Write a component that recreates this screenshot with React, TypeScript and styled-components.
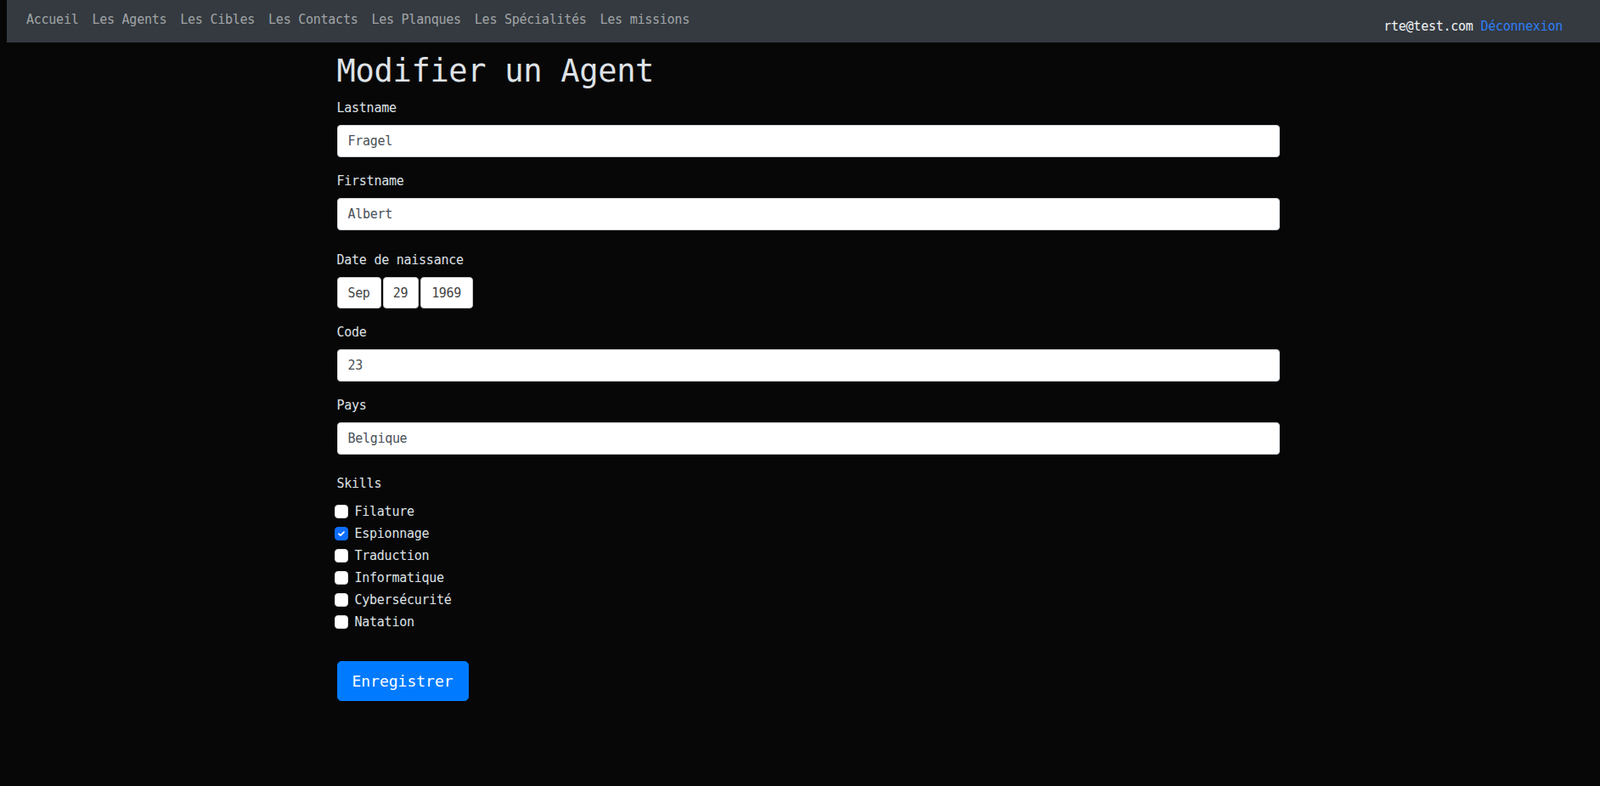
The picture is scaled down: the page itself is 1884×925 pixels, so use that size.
import styled, { createGlobalStyle } from "styled-components";

const mono = `"DejaVu Sans Mono", "Liberation Mono", monospace`;

const GlobalStyle = createGlobalStyle`
  html, body {
    margin: 0;
    padding: 0;
    background: #070707;
    font-family: ${mono};
    font-size: 15px;
    letter-spacing: -0.25px;
    color: #dee2e6;
  }
  * { box-sizing: border-box; }
`;

//Styled
const NavBar = styled.nav`
  margin-left: 8px;
  height: 50px;
  background: #343a40;
  display: flex;
  align-items: flex-start;
  justify-content: space-between;
  padding: 0 44px 0 15px;
`;

const NavLinks = styled.ul`
  list-style: none;
  margin: 11px 0 0;
  padding: 0;
  display: flex;
`;

const NavLink = styled.li`
  padding: 0 8px;
  line-height: 24px;
  color: rgba(255, 255, 255, 0.55);
  cursor: pointer;
`;

const UserBox = styled.div`
  margin-top: 19px;
  line-height: 24px;
  color: #f1f3f5;
  white-space: pre;
`;

const Logout = styled.a`
  color: #2f7ef6;
  text-decoration: none;
  cursor: pointer;
`;

const Page = styled.div`
  padding-left: 19px;
`;

const Container = styled.main`
  width: 1110px;
  margin: 0 auto;
`;

const Title = styled.h1`
  margin: 10px 0 7px;
  font-size: 37px;
  font-weight: 400;
  line-height: 48px;
  letter-spacing: -0.3px;
  color: #dee2e6;
`;

const Field = styled.div<{ $gap?: number }>`
  margin-top: ${(p) => p.$gap ?? 16}px;
  &:first-of-type {
    margin-top: 0;
  }
`;

const Label = styled.label`
  display: block;
  line-height: 24px;
  margin-bottom: 8px;
  color: #dee2e6;
`;

const Input = styled.input`
  display: block;
  width: 100%;
  height: 38px;
  padding: 0 12px;
  border: 1px solid #ced4da;
  border-radius: 4px;
  background: #fff;
  color: #495057;
  font-family: ${mono};
  font-size: 15px;
  letter-spacing: -0.3px;
  outline: none;
`;

const DateRow = styled.div`
  display: flex;
  gap: 2px;
`;

const DatePart = styled.div<{ $w: number }>`
  width: ${(p) => p.$w}px;
  height: 37px;
  display: flex;
  align-items: center;
  justify-content: center;
  background: #fff;
  border: 1px solid #c9c9c9;
  border-radius: 4px;
  color: #444;
  font-size: 15px;
  letter-spacing: -0.4px;
`;

const CheckList = styled.div`
  margin-top: 9px;
  margin-left: -3px;
`;

const CheckRow = styled.label`
  display: flex;
  align-items: center;
  gap: 8px;
  height: 24px;
  margin-bottom: 2px;
  line-height: 24px;
  color: #dee2e6;
  cursor: pointer;
`;

const Box = styled.span<{ $on?: boolean }>`
  width: 16px;
  height: 16px;
  flex: none;
  display: flex;
  align-items: center;
  justify-content: center;
  border-radius: 4px;
  background: ${(p) => (p.$on ? "#0d6efd" : "#fff")};
  border: 1px solid ${(p) => (p.$on ? "#0d6efd" : "#dcdcdc")};
`;

const SaveButton = styled.button`
  margin-top: 32px;
  height: 47px;
  padding: 0 16px;
  width: 155px;
  border: 1px solid #007bff;
  border-radius: 5px;
  background: #007bff;
  color: #fff;
  font-family: ${mono};
  font-size: 18px;
  letter-spacing: 0;
  cursor: pointer;
`;
//styled

const links = [
  "Accueil",
  "Les Agents",
  "Les Cibles",
  "Les Contacts",
  "Les Planques",
  "Les Spécialités",
  "Les missions",
];

const skills = [
  { name: "Filature", on: false },
  { name: "Espionnage", on: true },
  { name: "Traduction", on: false },
  { name: "Informatique", on: false },
  { name: "Cybersécurité", on: false },
  { name: "Natation", on: false },
];

function Check({ on }: { on: boolean }) {
  return (
    <Box $on={on}>
      {on && (
        <svg width="12" height="12" viewBox="0 0 20 20">
          <path
            d="m5 10.5 3.2 3.2L15 7"
            fill="none"
            stroke="#fff"
            strokeWidth="3"
            strokeLinecap="round"
            strokeLinejoin="round"
          />
        </svg>
      )}
    </Box>
  );
}

export default function App() {
  return (
    <>
      <GlobalStyle />
      <NavBar>
        <NavLinks>
          {links.map((l) => (
            <NavLink key={l}>{l}</NavLink>
          ))}
        </NavLinks>
        <UserBox>
          rte@test.com <Logout>Déconnexion</Logout>
        </UserBox>
      </NavBar>
      <Page>
        <Container>
          <Title>Modifier un Agent</Title>
          <Field>
            <Label>Lastname</Label>
            <Input defaultValue="Fragel" />
          </Field>
          <Field>
            <Label>Firstname</Label>
            <Input defaultValue="Albert" />
          </Field>
          <Field $gap={23}>
            <Label>Date de naissance</Label>
            <DateRow>
              <DatePart $w={52}>Sep</DatePart>
              <DatePart $w={42}>29</DatePart>
              <DatePart $w={62}>1969</DatePart>
            </DateRow>
          </Field>
          <Field>
            <Label>Code</Label>
            <Input defaultValue="23" />
          </Field>
          <Field>
            <Label>Pays</Label>
            <Input defaultValue="Belgique" />
          </Field>
          <Field $gap={22}>
            <Label style={{ marginBottom: 0 }}>Skills</Label>
            <CheckList>
              {skills.map((s) => (
                <CheckRow key={s.name}>
                  <Check on={s.on} />
                  {s.name}
                </CheckRow>
              ))}
            </CheckList>
          </Field>
          <SaveButton>Enregistrer</SaveButton>
        </Container>
      </Page>
    </>
  );
}
